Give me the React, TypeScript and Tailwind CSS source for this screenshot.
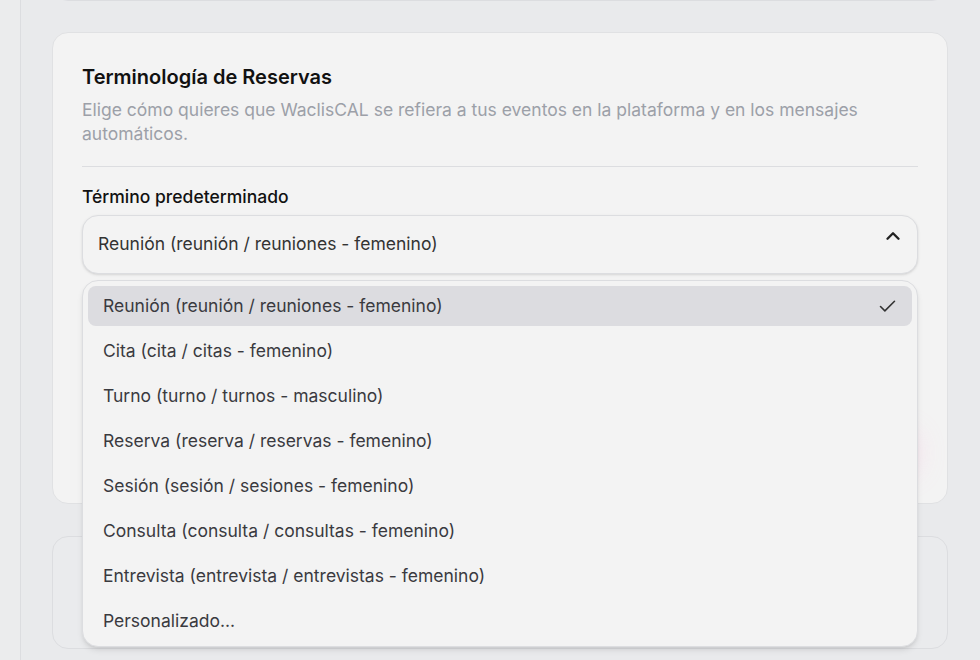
import React from "react";

const options = [
  "Reunión (reunión / reuniones - femenino)",
  "Cita (cita / citas - femenino)",
  "Turno (turno / turnos - masculino)",
  "Reserva (reserva / reservas - femenino)",
  "Sesión (sesión / sesiones - femenino)",
  "Consulta (consulta / consultas - femenino)",
  "Entrevista (entrevista / entrevistas - femenino)",
  "Personalizado...",
];

export default function App() {
  return (
    <div
      className="flex h-[660px] w-[980px] overflow-hidden bg-[#e9eaec] text-[#111]"
      style={{ fontFamily: "Inter, 'Noto Sans', sans-serif" }}
    >
      <aside className="w-[21px] shrink-0 border-r border-[#dcdde0] bg-[#ebeced]" />
      <main className="flex-1 pl-[31px] pr-[32px]">
        <div className="-mt-[19px] h-[20px] rounded-b-2xl border border-[#dcdde0]" />
        <section className="relative mt-[31px] h-[472px] rounded-2xl border border-[#e0e1e3] bg-[#f3f3f3] px-[29px] pt-[30px]">
          <h2 className="text-[20px] leading-7 font-semibold text-[#111]">Terminología de Reservas</h2>
          <p className="mt-[7px] text-[17.5px] leading-6 text-[#9ca0a8]">
            Elige cómo quieres que WaclisCAL se refiera a tus eventos en la plataforma y en los mensajes automáticos.
          </p>
          <div className="mt-[20px] border-t border-[#dcdde0]" />
          <label className="mt-[18px] block text-[17.5px] leading-6 font-medium text-[#111]">Término predeterminado</label>
          <div className="relative mt-[6px]">
            <div className="flex h-[59px] items-start justify-between rounded-2xl border border-[#dcdde0] bg-[#f3f3f3] pl-[15px] pr-[13px] shadow-sm">
              <span className="mt-[16px] text-[17.5px] leading-6 text-[#333]">Reunión (reunión / reuniones - femenino)</span>
              <svg className="mt-[9px]" width="22" height="22" viewBox="0 0 24 24" fill="none" stroke="#222" strokeWidth="2.6" strokeLinecap="round" strokeLinejoin="round">
                <path d="m18 15-6-6-6 6" />
              </svg>
            </div>
            <div className="absolute left-[792px] top-[222px] h-[32px] w-[40px] rounded-xl bg-pink-300 opacity-40 blur-lg" />
            <ul className="absolute left-0 right-0 top-full z-10 mt-[6px] flex flex-col gap-[5px] rounded-2xl border border-[#dcdde0] bg-[#f3f3f3] p-[5px] shadow-md">
              {options.map((o, i) => (
                <li
                  key={o}
                  className={`flex h-[40px] items-center justify-between rounded-lg pl-[15px] pr-[14px] text-[17.5px] text-[#3a3a3f] ${i === 0 ? "bg-[#dcdce0]" : ""}`}
                >
                  <span>{o}</span>
                  {i === 0 && (
                    <svg width="21" height="21" viewBox="0 0 24 24" fill="none" stroke="#333" strokeWidth="1.8" strokeLinecap="round" strokeLinejoin="round">
                      <path d="M20 6 9 17l-5-5" />
                    </svg>
                  )}
                </li>
              ))}
            </ul>
          </div>
        </section>
        <section className="mt-[32px] h-[113px] rounded-2xl border border-[#dcdde0] bg-[#eaebed]" />
      </main>
    </div>
  );
}
